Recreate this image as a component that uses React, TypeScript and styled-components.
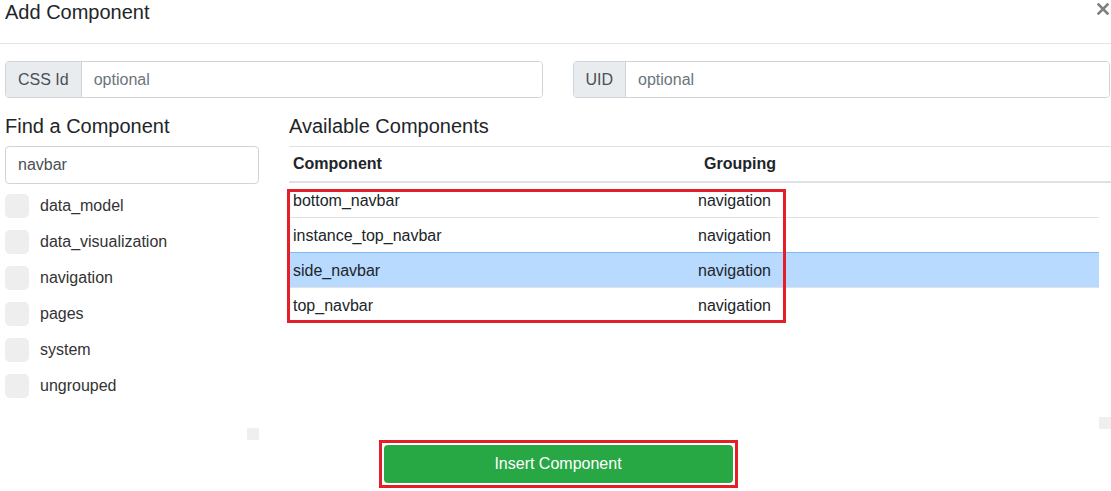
import React from "react";
import styled, { createGlobalStyle } from "styled-components";

const GlobalStyle = createGlobalStyle`
  html, body {
    margin: 0;
    padding: 0;
    background: #fff;
  }
  body {
    font-family: "Liberation Sans", Arial, sans-serif;
    color: #212529;
    width: 1111px;
    height: 491px;
    overflow: hidden;
  }
  * { box-sizing: border-box; }
`;

const Page = styled.div`
  width: 1111px;
  height: 491px;
  display: flex;
  flex-direction: column;
`;

const Header = styled.header`
  height: 44px;
  border-bottom: 1px solid #e5e5e5;
  display: flex;
  justify-content: space-between;
  align-items: flex-start;
  padding: 1px 2px 0 5px;
`;

const Title = styled.h5`
  margin: 0;
  font-size: 20px;
  line-height: 23px;
  font-weight: 400;
  color: #212529;
`;

const CloseButton = styled.button`
  border: none;
  background: none;
  padding: 0;
  margin-top: 2px;
  width: 12px;
  height: 12px;
  display: flex;
  cursor: pointer;
`;

const Content = styled.div`
  padding: 17px 0 0 5px;
  display: flex;
  flex-direction: column;
`;

const IdRow = styled.div`
  display: grid;
  grid-template-columns: 1fr 1fr;
  column-gap: 30px;
  margin-right: 1px;
`;

const InputGroup = styled.div`
  display: flex;
  height: 37px;
  border: 1px solid #ced4da;
  border-radius: 4px;
  overflow: hidden;
`;

const GroupLabel = styled.span`
  background: #e9ecef;
  padding: 0 12px;
  display: flex;
  align-items: center;
  border-right: 1px solid #ced4da;
  color: #495057;
  font-size: 16px;
`;

const GroupInput = styled.input`
  flex: 1;
  min-width: 0;
  border: none;
  outline: none;
  padding: 0 12px;
  font-size: 16px;
  font-family: inherit;
  color: #495057;
  &::placeholder { color: #6c757d; }
`;

const Section = styled.div`
  display: grid;
  grid-template-columns: 254px 1fr;
  column-gap: 30px;
  margin-top: 16px;
`;

const Column = styled.div`
  display: flex;
  flex-direction: column;
`;

const Heading = styled.h5`
  margin: 0 0 8px;
  font-size: 20px;
  line-height: 24px;
  font-weight: 400;
  color: #212529;
`;

const SearchInput = styled.input`
  width: 100%;
  height: 38px;
  border: 1px solid #ced4da;
  border-radius: 4px;
  padding: 0 12px;
  font-size: 16px;
  font-family: inherit;
  color: #495057;
  outline: none;
`;

const CheckList = styled.div`
  margin-top: 10px;
  display: flex;
  flex-direction: column;
  gap: 12px;
`;

const CheckItem = styled.label`
  display: flex;
  align-items: center;
  gap: 11px;
  height: 24px;
  font-size: 16px;
  line-height: 26px;
  color: #333;
`;

const CheckBox = styled.span`
  width: 24px;
  height: 24px;
  background: #eee;
  border-radius: 5px;
  flex: none;
`;

const CornerRow = styled.div<{ $gap: number }>`
  margin-top: ${(p) => p.$gap}px;
  display: flex;
  justify-content: flex-end;
`;

const Corner = styled.span`
  width: 12px;
  height: 12px;
  background: #efefef;
`;

const TableHead = styled.div`
  display: grid;
  grid-template-columns: 411px 1fr;
  border-top: 1px solid #dee2e6;
  border-bottom: 2px solid #dee2e6;
`;

const HeadCell = styled.div`
  padding: 5px 4px;
  line-height: 24px;
  font-size: 16px;
  font-weight: 700;
  color: #212529;
`;

const TableBody = styled.div`
  display: flex;
  height: 246px;
`;

const Rows = styled.div`
  flex: 1;
  position: relative;
`;

const ScrollTrack = styled.div`
  width: 12px;
  display: flex;
  flex-direction: column;
  justify-content: flex-end;
`;

const Row = styled.div<{ $first?: boolean; $selected?: boolean }>`
  display: grid;
  grid-template-columns: 405px 1fr;
  align-items: center;
  height: ${(p) => (p.$first ? 34 : 35)}px;
  border-top: ${(p) =>
    p.$first ? "none" : `1px solid ${p.$selected ? "#7fbaf5" : "#dee2e6"}`};
  background: ${(p) => (p.$selected ? "#b8daff" : "transparent")};
  font-size: 16px;
  color: #212529;
`;

const Cell = styled.div`
  padding: 1px 4px 0;
  line-height: 24px;
`;

const Annotation = styled.div`
  position: absolute;
  left: -2px;
  top: 6px;
  width: 499px;
  height: 134px;
  border: 3px solid #e51f2a;
  pointer-events: none;
`;

const Footer = styled.div`
  display: flex;
  justify-content: center;
`;

const HighlightFrame = styled.div`
  border: 3px solid #e51f2a;
  padding: 2px;
  display: flex;
`;

const InsertButton = styled.button`
  width: 349px;
  height: 38px;
  background: #28a745;
  color: #fff;
  border: none;
  border-radius: 4px;
  font-size: 16px;
  font-family: inherit;
  cursor: pointer;
`;

const groups = [
  "data_model",
  "data_visualization",
  "navigation",
  "pages",
  "system",
  "ungrouped",
];

const components = [
  { name: "bottom_navbar", group: "navigation" },
  { name: "instance_top_navbar", group: "navigation" },
  { name: "side_navbar", group: "navigation", selected: true },
  { name: "top_navbar", group: "navigation" },
];

export default function App() {
  return (
    <>
      <GlobalStyle />
      <Page>
        <Header>
          <Title>Add Component</Title>
          <CloseButton aria-label="Close">
            <svg width="12" height="12" viewBox="0 0 12 12">
              <path
                d="M1.5 1.5 L10.5 10.5 M10.5 1.5 L1.5 10.5"
                stroke="#808080"
                strokeWidth="2.6"
                strokeLinecap="square"
              />
            </svg>
          </CloseButton>
        </Header>
        <Content>
          <IdRow>
            <InputGroup>
              <GroupLabel>CSS Id</GroupLabel>
              <GroupInput placeholder="optional" />
            </InputGroup>
            <InputGroup>
              <GroupLabel>UID</GroupLabel>
              <GroupInput placeholder="optional" />
            </InputGroup>
          </IdRow>
          <Section>
            <Column>
              <Heading>Find a Component</Heading>
              <SearchInput defaultValue="navbar" />
              <CheckList>
                {groups.map((g) => (
                  <CheckItem key={g}>
                    <CheckBox />
                    {g}
                  </CheckItem>
                ))}
              </CheckList>
              <CornerRow $gap={30}>
                <Corner />
              </CornerRow>
            </Column>
            <Column>
              <Heading>Available Components</Heading>
              <TableHead>
                <HeadCell>Component</HeadCell>
                <HeadCell>Grouping</HeadCell>
              </TableHead>
              <TableBody>
                <Rows>
                  {components.map((c, i) => (
                    <Row key={c.name} $first={i === 0} $selected={c.selected}>
                      <Cell>{c.name}</Cell>
                      <Cell>{c.group}</Cell>
                    </Row>
                  ))}
                  <Annotation />
                </Rows>
                <ScrollTrack>
                  <Corner />
                </ScrollTrack>
              </TableBody>
            </Column>
          </Section>
          <Footer>
            <HighlightFrame>
              <InsertButton>Insert Component</InsertButton>
            </HighlightFrame>
          </Footer>
        </Content>
      </Page>
    </>
  );
}
